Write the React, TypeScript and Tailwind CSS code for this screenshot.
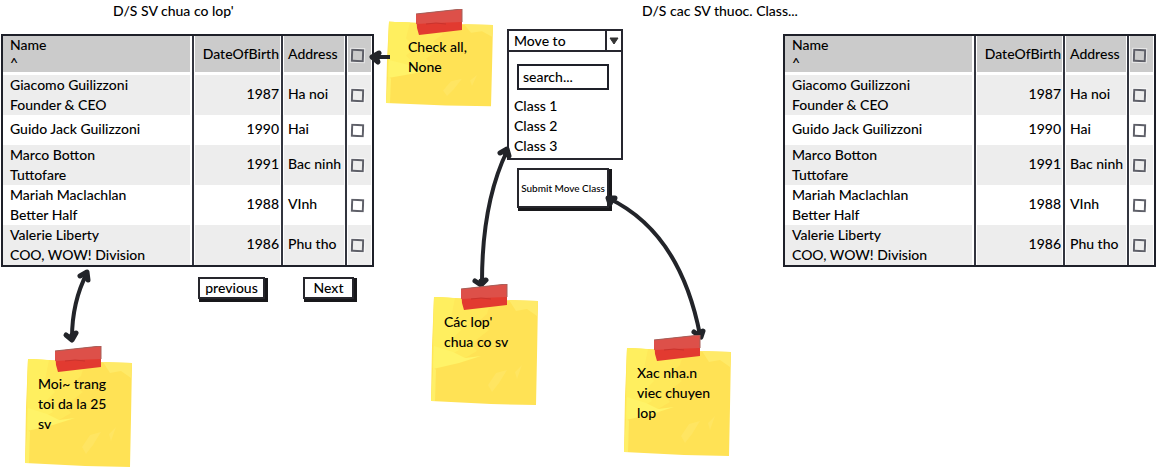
import React from "react";

type Student = { name: string[]; year: string; address: string };

const students: Student[] = [
  { name: ["Giacomo Guilizzoni", "Founder & CEO"], year: "1987", address: "Ha noi" },
  { name: ["Guido Jack Guilizzoni"], year: "1990", address: "Hai" },
  { name: ["Marco Botton", "Tuttofare"], year: "1991", address: "Bac ninh" },
  { name: ["Mariah Maclachlan", "Better Half"], year: "1988", address: "VInh" },
  { name: ["Valerie Liberty", "COO, WOW! Division"], year: "1986", address: "Phu tho" },
];

// Vertical rule on the left of a column, with the thin white gutter around it.
const ruled =
  "border-l-2 border-[#33353f] shadow-[inset_1px_0_0_#fff,inset_-1px_0_0_#fff]";
const ruledHead =
  "border-l-2 border-[#33353f] shadow-[inset_0_-3px_0_#fff,inset_1px_0_0_#fff,inset_-1px_0_0_#fff]";

function Check({ label }: { label: string }) {
  return (
    <input
      type="checkbox"
      aria-label={label}
      className="ml-1 block size-[13px] rotate-2 appearance-none border-2 border-[#5f6069] bg-transparent outline outline-white/60 checked:bg-[#5f6069]"
    />
  );
}

function StudentTable({ label }: { label: string }) {
  return (
    <table
      aria-label={label}
      className="w-[373px] table-fixed border-separate border-spacing-0 border-2 border-[#1e2029] text-left"
    >
      <colgroup>
        <col />
        <col className="w-[89px]" />
        <col className="w-16" />
        <col className="w-[27px]" />
      </colgroup>
      <thead>
        <tr className="h-[39px] bg-[#cbcbcb]">
          <th className="p-0 pb-[3px] pl-[7px] align-top leading-[18px] font-medium shadow-[inset_0_-3px_0_#fff,inset_-2px_0_0_#fff]">
            Name
            <br />^
          </th>
          <th className={`p-0 pr-0.5 pb-[3px] text-right font-medium ${ruledHead}`}>
            DateOfBirth
          </th>
          <th className={`p-0 pb-[3px] pl-[5px] font-medium ${ruledHead}`}>Address</th>
          <th className={`p-0 pb-px ${ruledHead}`}>
            <Check label="Select all" />
          </th>
        </tr>
      </thead>
      <tbody>
        {students.map((s) => (
          <tr key={s.name[0]} className="odd:bg-[#ededed]">
            <td className="p-0 pl-[7px] shadow-[inset_-2px_0_0_#fff]">
              {s.name.map((line) => (
                <div key={line} className={s.name.length === 1 ? "pt-1 pb-1.5" : ""}>
                  {line}
                </div>
              ))}
            </td>
            <td className={`p-0 pr-0.5 pb-0.5 text-right ${ruled}`}>{s.year}</td>
            <td className={`p-0 pb-0.5 pl-[5px] whitespace-nowrap ${ruled}`}>{s.address}</td>
            <td className={`p-0 ${ruled}`}>
              <Check label={`Select ${s.name[0]}`} />
            </td>
          </tr>
        ))}
      </tbody>
    </table>
  );
}

function Note({ children, short = false }: { children: React.ReactNode; short?: boolean }) {
  return (
    <div className={`relative w-[108px] pt-4 pl-[13px] ${short ? "h-[86px]" : "h-[110px]"}`}>
      <svg
        aria-hidden="true"
        className="absolute inset-0 size-full"
        viewBox="0 0 108 110"
        preserveAspectRatio="none"
      >
        <path d="M3 1 L40 3 L107 5 L106 60 L105 109 L60 108 L0 105 L1 50Z" fill="#ffe255" />
        <path d="M3 1 L40 3 L60 5 L56 18 L47 26 L58 34 L40 48 L46 55 L34 62 L18 64 L1 72Z" fill="#ffe95a" />
        <path d="M3 1 L24 2 L20 22 L30 34 L20 44 L28 54 L14 62 L2 68Z" fill="#ffef5f" />
        <path d="M3 50 L22 56 L34 62 L50 60 L28 67 L2 73Z" fill="#fff368" />
        <path d="M78 4 L107 5 L106 20 L96 13 L85 15Z" fill="#ffea68" />
        <path d="M57 89 L65 77 L76 74 L68 87 L61 96Z M84 76 L91 69 L86 83Z" fill="#ffe562" />
        <path d="M2 70 L0 105 L4 105 L5 74Z" fill="#ffef68" />
      </svg>
      <svg
        aria-hidden="true"
        className="absolute -top-3 left-[30px] h-[27px] w-[47px]"
        viewBox="0 0 47 27"
      >
        <path d="M0 5 L46 0 L46 21 L3 26 L1 19Z" fill="#e23a30" />
        <path d="M0 5 L46 0 L46 13 L20 14 L0 15Z" fill="#dd5049" />
        <path d="M0 5 L46 0 L46 13" fill="none" stroke="#a5605a" />
        <path d="M10 15 L20 14 L30 15" fill="none" stroke="#c9332d" />
      </svg>
      <p className="relative">{children}</p>
    </div>
  );
}

function Arrow({
  box,
  className,
  line,
  heads,
}: {
  box: string;
  className: string;
  line: string;
  heads: string;
}) {
  return (
    <svg
      aria-hidden="true"
      viewBox={box}
      className={`pointer-events-none absolute z-10 ${className}`}
      fill="none"
      stroke="#222429"
      strokeLinecap="round"
      strokeLinejoin="round"
    >
      <path d={line} strokeWidth="4" />
      <path d={heads} strokeWidth="5" />
    </svg>
  );
}

const sketchButton =
  "border-2 border-[#26262c] bg-white shadow-[2px_2px_0_1px_#18181b] leading-[18px]";

export default function App() {
  return (
    <main className="flex min-h-screen items-start bg-white px-px font-['Comic_Sans_MS','Lato',sans-serif] text-[14px] leading-5 font-medium text-black">
      <section className="relative w-[373px] shrink-0">
        <h2 className="pt-px pb-[13px] pl-28">D/S SV chua co lop'</h2>
        <StudentTable label="D/S SV chua co lop'" />
        <div className="mt-2.5 flex justify-end gap-[38px] pr-5">
          <button type="button" className={`w-[67px] ${sketchButton}`}>
            previous
          </button>
          <button type="button" className={`w-[51px] ${sketchButton}`}>
            Next
          </button>
        </div>
        <Arrow
          box="60 266 34 80"
          className="top-[266px] left-[59px] h-20 w-[34px]"
          line="M87 273 Q72 302 72 338"
          heads="M80 276 L87 272 L88 280 L85 276 M66 335 L72 340 L76 333 L72 335"
        />
        <Arrow
          box="366 48 24 18"
          className="top-12 left-[365px] h-[18px] w-6"
          line="M372 57 H390"
          heads="M379 53 L372 57 L378 62 L376 57"
        />
        <div className="mt-[59px] ml-6">
          <Note>
            Moi~ trang
            <br />
            toi da la 25
            <br />
            sv
          </Note>
        </div>
      </section>

      <aside className="mt-[21px] ml-3 shrink-0">
        <div className="[&_p]:pl-[9px]">
          <Note short>
            Check all,
            <br />
            None
          </Note>
        </div>
      </aside>

      <section className="relative ml-[13px] w-[116px] shrink-0 pt-[29px]">
        <button
          type="button"
          aria-expanded="true"
          className="flex h-[23px] w-full items-stretch border-2 border-[#26262f] bg-white text-left"
        >
          <span className="flex-1 pl-[5px] leading-[19px]">Move to</span>
          <span className="flex w-4 items-center justify-center border-l-2 border-[#26262f]">
            <svg aria-hidden="true" className="h-2 w-2.5" viewBox="0 0 10 8">
              <path d="M1 1 H9 L5 7Z" fill="#333" stroke="#333" strokeLinejoin="round" />
            </svg>
          </span>
        </button>
        <div className="border-2 border-t-0 border-[#26262f] pt-3 pb-0.5">
          <input
            type="text"
            aria-label="search"
            placeholder="search..."
            className="ml-2 block h-[26px] w-[92px] border-2 border-[#1e2029] bg-white px-1 pb-0.5 placeholder:text-black"
          />
          <ul className="mt-1.5 pl-[5px]">
            <li>Class 1</li>
            <li>Class 2</li>
            <li>Class 3</li>
          </ul>
        </div>
        <button
          type="button"
          className="mt-2 ml-2.5 h-10 w-[92px] border-2 border-[#26262c] bg-white text-[10px] whitespace-nowrap shadow-[2px_2px_0_1px_#18181b]"
        >
          Submit Move Class
        </button>
        <Arrow
          box="470 142 46 150"
          className="top-[142px] -left-[37px] h-[150px] w-[46px]"
          line="M507 151 Q482 203 482 282"
          heads="M500 153 L507 149 L509 156 L505 153 M475 281 L481 285 L486 280 L481 281"
        />
        <Arrow
          box="600 190 112 152"
          className="top-[190px] left-[93px] h-[152px] w-28"
          line="M608 198 Q680 232 700 335"
          heads="M615 198 L608 198 L610 204 L612 200 M694 332 L701 337 L703 331 L699 333"
        />
        <div className="absolute top-[296px] -left-[76px] z-20">
          <Note>
            Các lop'
            <br />
            chua co sv
          </Note>
        </div>
        <div className="absolute top-[347px] left-[117px] z-20">
          <Note>
            Xac nha.n
            <br />
            viec chuyen
            <br />
            lop
          </Note>
        </div>
      </section>

      <section className="ml-[19px] min-w-[513px] flex-1">
        <h2 className="pt-px pb-[13px]">D/S cac SV thuoc. Class...</h2>
        <div className="flex justify-end">
          <StudentTable label="D/S cac SV thuoc. Class..." />
        </div>
      </section>
    </main>
  );
}
